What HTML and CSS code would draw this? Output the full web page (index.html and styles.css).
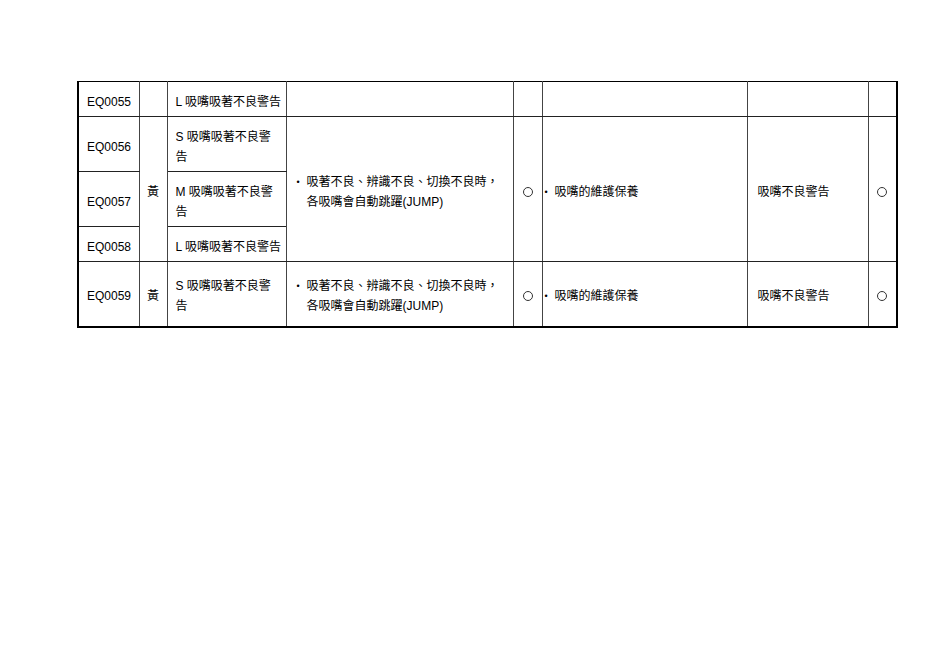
FILE: index.html
```html
<!DOCTYPE html>
<html lang="zh-Hant">
<head>
<meta charset="utf-8">
<link rel="stylesheet" href="styles.css">
</head>
<body>
<div class="page">
<table class="grid">
<colgroup>
<col class="c1"><col class="c2"><col class="c3"><col class="c4"><col class="c5"><col class="c6"><col class="c7"><col class="c8">
</colgroup>
<tbody>
<tr class="r35 grp">
<td class="code">EQ0055</td>
<td class="mid"></td>
<td class="name">L 吸嘴吸著不良警告</td>
<td></td><td></td><td></td><td></td><td></td>
</tr>
<tr class="r55 grp">
<td class="code">EQ0056</td>
<td class="mid" rowspan="3">黃</td>
<td class="name">S 吸嘴吸著不良警<br>告</td>
<td class="desc" rowspan="3"><div class="bul"><span class="dot">•</span><span>吸著不良、辨識不良、切換不良時，<br>各吸嘴會自動跳躍(JUMP)</span></div></td>
<td class="mid" rowspan="3"><span class="circ"></span></td>
<td class="act" rowspan="3"><div class="bul"><span class="dot2">•</span><span>吸嘴的維護保養</span></div></td>
<td class="msg" rowspan="3">吸嘴不良警告</td>
<td class="mid" rowspan="3"><span class="circ"></span></td>
</tr>
<tr class="r55">
<td class="code">EQ0057</td>
<td class="name">M 吸嘴吸著不良警<br>告</td>
</tr>
<tr class="r35">
<td class="code">EQ0058</td>
<td class="name">L 吸嘴吸著不良警告</td>
</tr>
<tr class="r65 grp">
<td class="code">EQ0059</td>
<td class="mid">黃</td>
<td class="name">S 吸嘴吸著不良警<br>告</td>
<td class="desc"><div class="bul"><span class="dot">•</span><span>吸著不良、辨識不良、切換不良時，<br>各吸嘴會自動跳躍(JUMP)</span></div></td>
<td class="mid"><span class="circ"></span></td>
<td class="act"><div class="bul"><span class="dot2">•</span><span>吸嘴的維護保養</span></div></td>
<td class="msg">吸嘴不良警告</td>
<td class="mid"><span class="circ"></span></td>
</tr>
</tbody>
</table>
</div>
</body>
</html>
```

FILE: styles.css
```css
html, body {
  margin: 0;
  padding: 0;
  background: #fff;
}
.page {
  padding: 81px 0 0 77px;
  font-family: "Liberation Sans", "Noto Sans CJK TC", Arial, sans-serif;
  font-size: 12px;
  color: #000;
}
.grid {
  border-collapse: collapse;
  table-layout: fixed;
  width: 820px;
  border-top: 1px solid #555;
  border-left: 2px solid #000;
  border-right: 2px solid #000;
  border-bottom: 2px solid #000;
}
.c1 { width: 61px; }
.c2 { width: 28px; }
.c3 { width: 119px; }
.c4 { width: 227px; }
.c5 { width: 29px; }
.c6 { width: 205px; }
.c7 { width: 121px; }
.c8 { width: 29px; }
.grid td {
  border-left: 1px solid #444;
  border-right: 1px solid #444;
  border-top: 1px solid #222;
  border-bottom: 1px solid #222;
  padding: 5px 0 0 8px;
  vertical-align: middle;
  line-height: 20px;
  white-space: nowrap;
  overflow: hidden;
}
.grid tr.grp td {
  border-top: 1px solid #000;
}
.r35 { height: 35px; }
.r55 { height: 55px; }
.r65 { height: 65px; }
.grid td.mid {
  text-align: center;
  padding-left: 0;
}
.grid td.name { padding-left: 8px; }
.grid td.desc { padding-left: 10px; }
.grid td.act { padding-left: 2px; }
.grid td.msg { padding-left: 10px; }
.bul {
  display: flex;
  align-items: flex-start;
}
.dot {
  width: 10px;
  flex: none;
  font-size: 9px;
}
.dot2 {
  width: 10px;
  flex: none;
  font-size: 9px;
}
.circ {
  display: inline-block;
  width: 8px;
  height: 8px;
  border: 1px solid #333;
  border-radius: 50%;
  vertical-align: -1px;
}
```
